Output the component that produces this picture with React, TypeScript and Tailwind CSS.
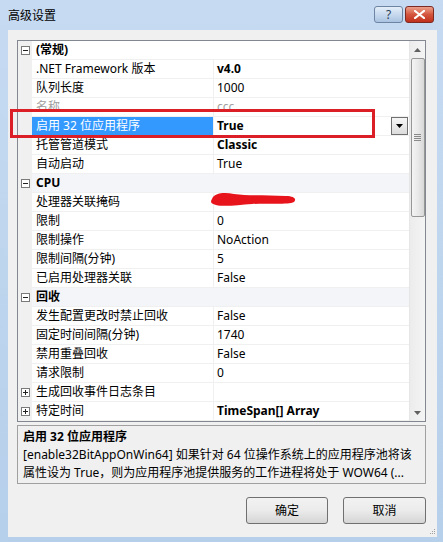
import React from "react";

type Row =
  | { kind: "cat"; label: string; tint?: boolean }
  | {
      kind: "prop";
      name: string;
      value: string;
      bold?: boolean;
      dim?: boolean;
      selected?: boolean;
      expand?: boolean;
      redacted?: boolean;
    };

const rows: Row[] = [
  { kind: "cat", label: "(常规)" },
  { kind: "prop", name: ".NET Framework 版本", value: "v4.0", bold: true },
  { kind: "prop", name: "队列长度", value: "1000" },
  { kind: "prop", name: "名称", value: "ccc", dim: true },
  { kind: "prop", name: "启用 32 位应用程序", value: "True", bold: true, selected: true },
  { kind: "prop", name: "托管管道模式", value: "Classic", bold: true },
  { kind: "prop", name: "自动启动", value: "True" },
  { kind: "cat", label: "CPU", tint: true },
  { kind: "prop", name: "处理器关联掩码", value: "", redacted: true },
  { kind: "prop", name: "限制", value: "0" },
  { kind: "prop", name: "限制操作", value: "NoAction" },
  { kind: "prop", name: "限制间隔(分钟)", value: "5" },
  { kind: "prop", name: "已启用处理器关联", value: "False" },
  { kind: "cat", label: "回收", tint: true },
  { kind: "prop", name: "发生配置更改时禁止回收", value: "False" },
  { kind: "prop", name: "固定时间间隔(分钟)", value: "1740" },
  { kind: "prop", name: "禁用重叠回收", value: "False" },
  { kind: "prop", name: "请求限制", value: "0" },
  { kind: "prop", name: "生成回收事件日志条目", value: "", expand: true },
  { kind: "prop", name: "特定时间", value: "TimeSpan[] Array", bold: true, expand: true },
];

// little [-] / [+] box in the gutter
function ToggleBox({ open }: { open: boolean }) {
  return (
    <svg width="9" height="9" viewBox="0 0 9 9" className="block">
      <rect x="0.5" y="0.5" width="8" height="8" fill="#fff" stroke="#7a7a7a" />
      <line x1="2" y1="4.5" x2="7" y2="4.5" stroke="#222" />
      {!open && <line x1="4.5" y1="2" x2="4.5" y2="7" stroke="#222" />}
    </svg>
  );
}

function Scribble() {
  return (
    <svg width="90" height="18" viewBox="0 0 90 18" className="absolute left-[-6px] top-[-3px]">
      <path
        d="M4 9 C6 3 16 2 26 4 C40 6 60 5 78 6 C86 6 89 9 86 12 C80 15 60 13 44 14 C30 15 16 17 8 15 C3 14 2 12 4 9 Z"
        fill="#e8141c"
      />
    </svg>
  );
}

function GridRow({ row }: { row: Row }) {
  if (row.kind === "cat") {
    return (
      <div className="flex h-[19px]">
        <div className="w-[14px] bg-[#f0f0f0] flex items-center justify-center">
          <ToggleBox open />
        </div>
        <div
          className={`flex-1 flex items-center pl-[4px] font-bold border-b border-[#f0f0f0] ${
            row.tint ? "bg-[#f4f5f8]" : "bg-white"
          }`}
        >
          {row.label}
        </div>
      </div>
    );
  }

  return (
    <div className="flex h-[19px]">
      <div className="w-[14px] bg-[#f0f0f0] flex items-center justify-center">
        {row.expand && <ToggleBox open={false} />}
      </div>
      <div
        className={`w-[181px] flex items-center pl-[4px] border-b ${
          row.selected ? "bg-[#3399ff] text-white border-[#3399ff]" : "bg-white border-[#f0f0f0]"
        } ${row.dim ? "text-[#a0a0a0]" : ""}`}
      >
        {row.name}
      </div>
      <div className="relative flex-1 flex items-center pl-[3px] bg-white border-l border-b border-[#f0f0f0]">
        <span className={`${row.bold ? "font-bold" : ""} ${row.dim ? "text-[#a0a0a0]" : ""}`}>
          {row.value}
        </span>
        {row.redacted && <Scribble />}
        {row.selected && (
          <div className="absolute right-[1px] top-[0px] w-[17px] h-[18px] border border-[#707070] bg-gradient-to-b from-[#f6f6f6] to-[#dcdcdc] flex items-center justify-center">
            <svg width="7" height="4" viewBox="0 0 7 4">
              <path d="M0 0 H7 L3.5 4 Z" fill="#000" />
            </svg>
          </div>
        )}
      </div>
    </div>
  );
}

function ScrollBar() {
  return (
    <div className="w-[16px] bg-gradient-to-r from-[#ececec] to-[#f4f4f4] border-l border-[#e6e6e6] flex flex-col items-center">
      <div className="h-[17px] flex items-center justify-center">
        <svg width="7" height="4" viewBox="0 0 7 4">
          <path d="M0 4 H7 L3.5 0 Z" fill="#606060" />
        </svg>
      </div>
      <div className="w-[14px] h-[159px] rounded-[2px] border border-[#979797] bg-gradient-to-r from-[#f4f4f4] via-[#e9e9e9] to-[#d8d8d8] flex flex-col items-center justify-center gap-[1px]">
        <div className="w-[7px] h-[1px] bg-[#8a8a8a]" />
        <div className="w-[7px] h-[1px] bg-[#8a8a8a]" />
        <div className="w-[7px] h-[1px] bg-[#8a8a8a]" />
        <div className="w-[7px] h-[1px] bg-[#8a8a8a]" />
      </div>
      <div className="flex-1" />
      <div className="h-[17px] flex items-center justify-center">
        <svg width="7" height="4" viewBox="0 0 7 4">
          <path d="M0 0 H7 L3.5 4 Z" fill="#606060" />
        </svg>
      </div>
    </div>
  );
}

function TitleButtons() {
  return (
    <div className="flex gap-[2px] pt-[6px]">
      <div className="w-[29px] h-[17px] rounded-[3px] border border-[#6d85a3] bg-gradient-to-b from-[#e4eef9] via-[#c7d9ee] to-[#aac3e1] flex items-center justify-center text-[12px] text-[#2c3e57] leading-none">
        ?
      </div>
      <div className="w-[29px] h-[17px] rounded-[3px] border border-[#7d2a22] bg-gradient-to-b from-[#eba08c] via-[#d4553e] to-[#c0301c] flex items-center justify-center">
        <svg width="11" height="9" viewBox="0 0 11 9">
          <path d="M1 1 L10 8 M10 1 L1 8" stroke="#fff" strokeWidth="2.2" strokeLinecap="square" />
        </svg>
      </div>
    </div>
  );
}

export default function App() {
  return (
    <div className="relative w-[443px] h-[542px] overflow-hidden bg-gradient-to-b from-[#c6dbf2] to-[#b6cfea] font-['Noto_Sans','Noto_Sans_CJK_SC',sans-serif] text-[12px] text-black">
      {/* Title bar */}
      <div className="h-[30px] flex justify-between pl-[8px] pr-[9px]">
        <div className="pt-[7px] text-[12px] text-black">高级设置</div>
        <TitleButtons />
      </div>

      {/* Client area */}
      <div className="relative ml-[8px] mr-[6px] h-[507px] bg-[#f0f0f0] pt-[10px] pl-[9px] pr-[11px]">
        {/* Property grid */}
        <div className="flex border border-[#828790] bg-white">
          <div className="flex-1 flex flex-col">
            {rows.map((row, i) => (
              <GridRow key={i} row={row} />
            ))}
          </div>
          <ScrollBar />
        </div>

        {/* Description */}
        <div className="mt-[3px] h-[59px] border border-[#a0a0a0] px-[5px] pt-[2px] leading-[18px]">
          <div className="font-bold">启用 32 位应用程序</div>
          <div>[enable32BitAppOnWin64] 如果针对 64 位操作系统上的应用程序池将该</div>
          <div>属性设为 True，则为应用程序池提供服务的工作进程将处于 WOW64 (...</div>
        </div>

        {/* Buttons */}
        <div className="mt-[13px] flex justify-end gap-[15px]">
          <button className="w-[82px] h-[27px] rounded-[3px] border border-[#707070] bg-gradient-to-b from-[#f2f2f2] via-[#ebebeb] to-[#d5d5d5] text-[12px]">
            确定
          </button>
          <button className="w-[83px] h-[27px] rounded-[3px] border border-[#707070] bg-gradient-to-b from-[#f2f2f2] via-[#ebebeb] to-[#d5d5d5] text-[12px]">
            取消
          </button>
        </div>

        {/* size grip */}
        <div className="absolute right-[2px] bottom-[3px] grid grid-cols-3 gap-[1px]">
          <span className="w-[1px] h-[1px]" />
          <span className="w-[1px] h-[1px]" />
          <span className="w-[1px] h-[1px] bg-[#a0a0a0]" />
          <span className="w-[1px] h-[1px]" />
          <span className="w-[1px] h-[1px] bg-[#a0a0a0]" />
          <span className="w-[1px] h-[1px] bg-[#a0a0a0]" />
          <span className="w-[1px] h-[1px] bg-[#a0a0a0]" />
          <span className="w-[1px] h-[1px] bg-[#a0a0a0]" />
          <span className="w-[1px] h-[1px] bg-[#a0a0a0]" />
        </div>
      </div>

      {/* red annotation box */}
      <div className="absolute left-[10px] top-[109px] w-[365px] h-[29px] border-[3px] border-[#dc1f26]" />
    </div>
  );
}
